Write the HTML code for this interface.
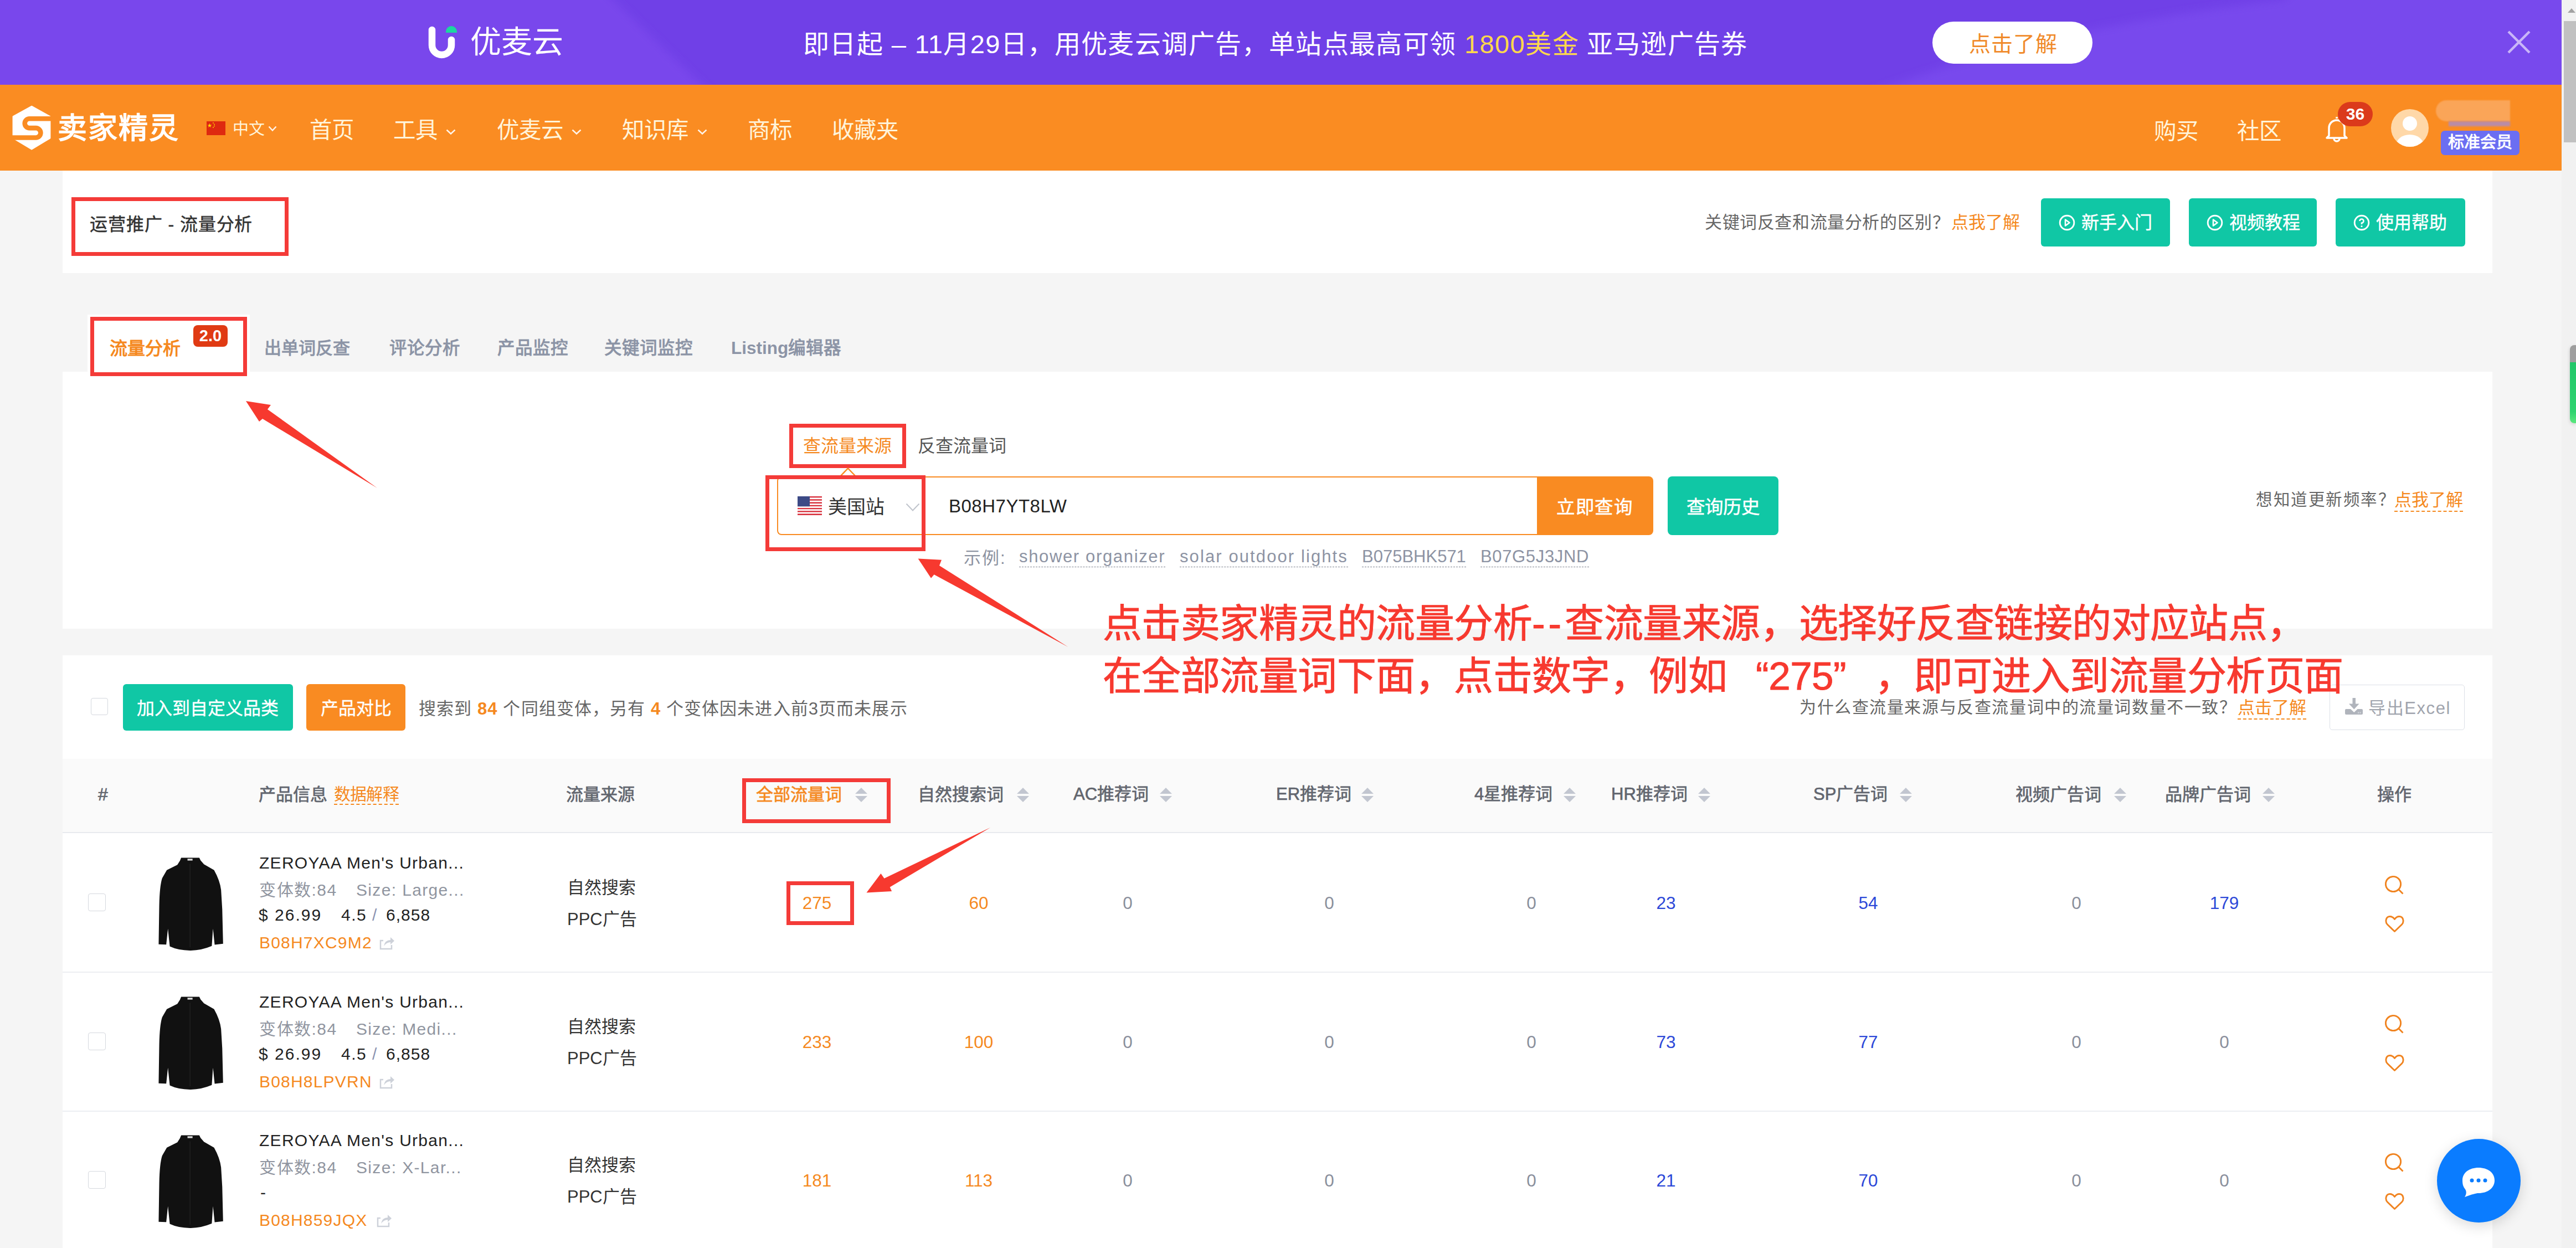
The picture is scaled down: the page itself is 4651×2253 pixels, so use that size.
<!DOCTYPE html><html lang="zh-CN"><head><meta charset="utf-8"><style>
html,body{margin:0;padding:0;}
body{width:4651px;height:2253px;overflow:hidden;position:relative;background:#F5F5F5;font-family:"Liberation Sans",sans-serif;}
.a{position:absolute;box-sizing:content-box;}
.t{position:absolute;white-space:nowrap;line-height:1;}
svg{position:absolute;overflow:visible;}
</style></head><body>
<svg style="left:0;top:0;overflow:hidden" width="4625" height="153" viewBox="0 0 4625 153"><defs><filter id="bb" x="-10%" y="-100%" width="120%" height="300%"><feGaussianBlur stdDeviation="8"/></filter></defs><rect width="4625" height="153" fill="#7040E7"/><path d="M-100 -100 L1003 -100 L1316 200 L-100 200 Z" fill="#7947EC" filter="url(#bb)"/><path d="M3250 220 Q3600 60 4123 0 L4250 -100 L4800 -100 L4800 220 Z" fill="#7848ED" filter="url(#bb)"/></svg>
<svg style="left:774px;top:46px" width="52" height="62" viewBox="0 0 52 62"><path d="M6 8 V35.5 A17.5 17.5 0 0 0 41 35.5 V26" fill="none" stroke="#fff" stroke-width="12.5" stroke-linecap="round"/><path d="M31 11 a10 10 0 0 1 20 0 v2 h-20 z" fill="#1DD6A0"/></svg>
<div class="t" style="left:849px;top:48.4px;font-size:56px;color:#fff;">优麦云</div>
<div class="t" style="left:1450px;top:56px;font-size:47px;color:#fff;letter-spacing:1.4px">即日起 – 11月29日，用优麦云调广告，单站点最高可领 <span style="color:#FFD84C">1800美金</span> 亚马逊广告券</div>
<div class="a" style="left:3489px;top:39px;width:289px;height:76px;background:#fff;border-radius:38px"></div>
<div class="t" style="left:3555px;top:59.6px;font-size:39px;color:#F08A2A;letter-spacing:1px">点击了解</div>
<svg style="left:4526px;top:54px" width="44" height="44" viewBox="0 0 44 44"><path d="M3 3 L41 41 M41 3 L3 41" stroke="rgba(255,255,255,0.6)" stroke-width="4.5"/></svg>
<div class="a" style="left:0px;top:153px;width:4625px;height:155px;background:#FA8C22"></div>
<svg style="left:15px;top:185px" width="85" height="90" viewBox="0 0 1179 1248"><path d="M585 100 L1040 355 L1040 890 L585 1165 L125 890 L125 355 Z" fill="#fff" stroke="#fff" stroke-width="40" stroke-linejoin="round"/><path d="M1150 405 L530 405 A117.5 117.5 0 0 0 530 640 L690 640 A120 120 0 0 1 690 880 L20 880" fill="none" stroke="#FA8C22" stroke-width="120"/></svg>
<div class="t" style="left:104px;top:204.5px;font-size:53px;color:#fff;font-weight:bold;letter-spacing:2px">卖家精灵</div>
<svg style="left:373px;top:219px" width="34" height="25" viewBox="0 0 34 25"><rect width="34" height="25" fill="#DE2910"/><path d="M5.5 3.5 l1 2.9 h3 l-2.4 1.8 0.9 2.9 -2.5-1.8 -2.5 1.8 0.9-2.9 -2.4-1.8 h3z" fill="#FFDE00"/><circle cx="12" cy="3" r="0.9" fill="#FFDE00"/><circle cx="14" cy="5.5" r="0.9" fill="#FFDE00"/><circle cx="14" cy="8.5" r="0.9" fill="#FFDE00"/><circle cx="12" cy="11" r="0.9" fill="#FFDE00"/></svg>
<div class="t" style="left:420px;top:219.2px;font-size:29px;color:#FFF4DA;">中文</div>
<svg style="left:484px;top:227px" width="16" height="10" viewBox="0 0 16 10"><path d="M1.5 1.5 L8.0 8.5 L14.5 1.5" fill="none" stroke="rgba(255,255,255,0.9)" stroke-width="2.5"/></svg>
<div class="t" style="left:559px;top:214.6px;font-size:40.5px;color:#FFF4DA;">首页</div>
<div class="t" style="left:709.5px;top:214.6px;font-size:40.5px;color:#FFF4DA;">工具</div>
<svg style="left:805px;top:233px" width="18" height="10" viewBox="0 0 18 10"><path d="M1.5 1.5 L9.0 8.5 L16.5 1.5" fill="none" stroke="rgba(255,255,255,0.9)" stroke-width="2.5"/></svg>
<div class="t" style="left:897px;top:214.6px;font-size:40.5px;color:#FFF4DA;">优麦云</div>
<svg style="left:1032px;top:233px" width="18" height="10" viewBox="0 0 18 10"><path d="M1.5 1.5 L9.0 8.5 L16.5 1.5" fill="none" stroke="rgba(255,255,255,0.9)" stroke-width="2.5"/></svg>
<div class="t" style="left:1123px;top:214.6px;font-size:40.5px;color:#FFF4DA;">知识库</div>
<svg style="left:1259px;top:233px" width="18" height="10" viewBox="0 0 18 10"><path d="M1.5 1.5 L9.0 8.5 L16.5 1.5" fill="none" stroke="rgba(255,255,255,0.9)" stroke-width="2.5"/></svg>
<div class="t" style="left:1350px;top:214.6px;font-size:40.5px;color:#FFF4DA;">商标</div>
<div class="t" style="left:1502px;top:214.6px;font-size:40.5px;color:#FFF4DA;">收藏夹</div>
<div class="t" style="left:3889px;top:216.6px;font-size:40.5px;color:#FFF4DA;">购买</div>
<div class="t" style="left:4039px;top:216.6px;font-size:40.5px;color:#FFF4DA;">社区</div>
<svg style="left:4196px;top:207px" width="46" height="50" viewBox="0 0 46 50"><path d="M23 4 V7 M9 38 V24 A14 14 0 0 1 37 24 V38 L41 42 H5 L9 38 Z M18 43 A5 5 0 0 0 28 43" fill="none" stroke="#fff" stroke-width="3.5" stroke-linejoin="round"/></svg>
<div class="a" style="left:4221px;top:184px;width:63px;height:44px;background:#DB3A1B;border-radius:22px"></div>
<div class="t" style="left:4221px;top:191px;width:63px;text-align:center;font-size:30px;font-weight:bold;color:#fff">36</div>
<svg style="left:4317px;top:197px" width="68" height="68" viewBox="0 0 68 68"><defs><clipPath id="cc"><circle cx="34" cy="34" r="34"/></clipPath></defs><circle cx="34" cy="34" r="34" fill="#FFD8A8"/><g clip-path="url(#cc)"><circle cx="34" cy="26" r="13" fill="#fff"/><ellipse cx="34" cy="66" rx="25" ry="20" fill="#fff"/></g></svg>
<div class="a" style="left:4398px;top:181px;width:134px;height:38px;background:#FAA558;border-radius:19px 0 0 19px;filter:blur(1px)"></div>
<div class="a" style="left:4421px;top:219px;width:111px;height:9px;background:#B98CA6;filter:blur(1.5px)"></div>
<div class="a" style="left:4407px;top:236px;width:142px;height:44px;background:#6B6EF2;border-radius:7px"></div>
<div class="t" style="left:4420px;top:242.7px;font-size:29px;color:#fff;font-weight:bold">标准会员</div>
<div class="a" style="left:113px;top:308px;width:4387px;height:185px;background:#fff"></div>
<div class="a" style="left:129px;top:356px;width:378px;height:92px;border:7px solid #F43B38"></div>
<div class="t" style="left:162px;top:389.2px;font-size:32px;color:#333;letter-spacing:0.9px;-webkit-text-stroke:0.5px #333">运营推广 - 流量分析</div>
<div class="t" style="left:3078px;top:385.7px;font-size:31px;color:#666;letter-spacing:0.6px">关键词反查和流量分析的区别？</div>
<div class="t" style="left:3523px;top:385.7px;font-size:31px;color:#F5891F;">点我了解</div>
<div class="a" style="left:3685px;top:358px;width:233px;height:87px;background:#10C7A5;border-radius:6px"></div>
<svg style="left:3716px;top:386px" width="32" height="32" viewBox="0 0 32 32"><circle cx="16" cy="16" r="12.8" fill="none" stroke="#fff" stroke-width="2.9"/><path d="M13 10.5 L20.5 16 L13 21.5 Z" fill="none" stroke="#fff" stroke-width="2.6" stroke-linejoin="round"/></svg>
<div class="t" style="left:3758px;top:385.7px;font-size:32px;color:#fff;-webkit-text-stroke:0.4px #fff">新手入门</div>
<div class="a" style="left:3952px;top:358px;width:231px;height:87px;background:#10C7A5;border-radius:6px"></div>
<svg style="left:3983px;top:386px" width="32" height="32" viewBox="0 0 32 32"><circle cx="16" cy="16" r="12.8" fill="none" stroke="#fff" stroke-width="2.9"/><path d="M13 10.5 L20.5 16 L13 21.5 Z" fill="none" stroke="#fff" stroke-width="2.6" stroke-linejoin="round"/></svg>
<div class="t" style="left:4025px;top:385.7px;font-size:32px;color:#fff;-webkit-text-stroke:0.4px #fff">视频教程</div>
<div class="a" style="left:4217px;top:358px;width:234px;height:87px;background:#10C7A5;border-radius:6px"></div>
<svg style="left:4248px;top:386px" width="32" height="32" viewBox="0 0 32 32"><g transform="translate(2 2)"><circle cx="14" cy="14" r="12.8" fill="none" stroke="#fff" stroke-width="2.9"/><path d="M10.5 11 A3.5 3.5 0 1 1 14 14.5 V17" fill="none" stroke="#fff" stroke-width="2.6"/><circle cx="14" cy="20.5" r="1.6" fill="#fff"/></g></svg>
<div class="t" style="left:4290px;top:385.7px;font-size:32px;color:#fff;-webkit-text-stroke:0.4px #fff">使用帮助</div>
<div class="a" style="left:113px;top:671px;width:4387px;height:464px;background:#fff"></div>
<div class="a" style="left:158px;top:568px;width:293px;height:110px;background:#fff"></div>
<div class="a" style="left:163px;top:572px;width:269px;height:93px;border:7px solid #F43B38"></div>
<div class="t" style="left:198px;top:612.7px;font-size:32px;color:#F5891F;font-weight:bold">流量分析</div>
<div class="a" style="left:349px;top:587px;width:62px;height:39px;background:#E03A13;border-radius:8px"></div>
<div class="t" style="left:349px;top:592px;width:62px;text-align:center;font-size:29px;font-weight:bold;color:#fff">2.0</div>
<div class="t" style="left:477px;top:612.7px;font-size:31px;color:#8C94A6;font-weight:bold">出单词反查</div>
<div class="t" style="left:703px;top:612.7px;font-size:31.5px;color:#8C94A6;font-weight:bold">评论分析</div>
<div class="t" style="left:898px;top:612.7px;font-size:31.5px;color:#8C94A6;font-weight:bold">产品监控</div>
<div class="t" style="left:1091px;top:612.7px;font-size:31.5px;color:#8C94A6;font-weight:bold">关键词监控</div>
<div class="t" style="left:1320px;top:613px;font-size:31.5px;color:#8C94A6;font-weight:bold">Listing编辑器</div>
<div class="t" style="left:1450px;top:788.7px;font-size:32px;color:#F5891F;">查流量来源</div>
<div class="t" style="left:1657px;top:788.7px;font-size:32px;color:#555;">反查流量词</div>
<div class="a" style="left:1425px;top:765px;width:197px;height:66px;border:7px solid #F43B38"></div>
<div class="a" style="left:1403px;top:860px;width:1372px;height:102px;border:2px solid #F98B22;border-right:none;border-radius:8px 0 0 8px;background:#fff"></div>
<svg style="left:1514px;top:844px" width="34" height="19" viewBox="0 0 34 19"><path d="M1 18 L17 1.5 L33 18" fill="#fff" stroke="#F98B22" stroke-width="2.5"/></svg>
<svg style="left:1440px;top:896px" width="44" height="34" viewBox="0 0 44 34"><rect y="0.00" width="44" height="2.62" fill="#D8333F"/><rect y="2.62" width="44" height="2.62" fill="#fff"/><rect y="5.23" width="44" height="2.62" fill="#D8333F"/><rect y="7.85" width="44" height="2.62" fill="#fff"/><rect y="10.46" width="44" height="2.62" fill="#D8333F"/><rect y="13.08" width="44" height="2.62" fill="#fff"/><rect y="15.69" width="44" height="2.62" fill="#D8333F"/><rect y="18.31" width="44" height="2.62" fill="#fff"/><rect y="20.92" width="44" height="2.62" fill="#D8333F"/><rect y="23.54" width="44" height="2.62" fill="#fff"/><rect y="26.15" width="44" height="2.62" fill="#D8333F"/><rect y="28.77" width="44" height="2.62" fill="#fff"/><rect y="31.38" width="44" height="2.62" fill="#D8333F"/><rect width="22" height="18.3" fill="#3C4A86"/></svg>
<div class="t" style="left:1495px;top:897.7px;font-size:34px;color:#333;">美国站</div>
<svg style="left:1635px;top:908px" width="26" height="15" viewBox="0 0 26 15"><path d="M1.5 1.5 L13.0 13.5 L24.5 1.5" fill="none" stroke="#C0C4CC" stroke-width="2"/></svg>
<div class="t" style="left:1713px;top:896.6px;font-size:33px;color:#222;letter-spacing:0.5px">B08H7YT8LW</div>
<div class="a" style="left:2775px;top:860px;width:210px;height:106px;background:#F98B22;border-radius:0 8px 8px 0"></div>
<div class="t" style="left:2810px;top:899.2px;font-size:33.5px;color:#fff;letter-spacing:1.6px;-webkit-text-stroke:0.5px #fff">立即查询</div>
<div class="a" style="left:3011px;top:860px;width:200px;height:106px;background:#10C7A5;border-radius:8px"></div>
<div class="t" style="left:3045px;top:899.2px;font-size:33.5px;color:#fff;-webkit-text-stroke:0.5px #fff">查询历史</div>
<div class="a" style="left:1382px;top:858px;width:275px;height:123px;border:7px solid #F43B38"></div>
<div class="t" style="left:1740px;top:991.7px;font-size:31px;color:#8C92A0;letter-spacing:2px">示例:</div>
<div class="t" style="left:1840px;top:988.8px;font-size:31px;color:#8D93A3;letter-spacing:1.65px;border-bottom:1.5px dashed #7D828E;padding-bottom:3px">shower organizer</div>
<div class="t" style="left:2130px;top:988.8px;font-size:31px;color:#8D93A3;letter-spacing:2.1px;border-bottom:1.5px dashed #7D828E;padding-bottom:3px">solar outdoor lights</div>
<div class="t" style="left:2459px;top:988.8px;font-size:31px;color:#8D93A3;letter-spacing:0px;border-bottom:1.5px dashed #7D828E;padding-bottom:3px">B075BHK571</div>
<div class="t" style="left:2673px;top:988.8px;font-size:31px;color:#8D93A3;letter-spacing:0.65px;border-bottom:1.5px dashed #7D828E;padding-bottom:3px">B07G5J3JND</div>
<div class="t" style="left:4073px;top:886.7px;font-size:29.5px;color:#666;letter-spacing:1.5px">想知道更新频率？</div>
<div class="t" style="left:4323px;top:886.7px;font-size:31px;color:#F5891F;border-bottom:2px dashed #F5891F;padding-bottom:4px">点我了解</div>
<div class="a" style="left:113px;top:1183px;width:4387px;height:1070px;background:#fff"></div>
<div class="a" style="left:164px;top:1260px;width:29px;height:29px;border:1.5px solid #D5D8DE;border-radius:4px;background:#fff"></div>
<div class="a" style="left:222px;top:1235px;width:307px;height:84px;background:#10C7A5;border-radius:6px"></div>
<div class="t" style="left:247px;top:1262.7px;font-size:32px;color:#fff;-webkit-text-stroke:0.4px #fff">加入到自定义品类</div>
<div class="a" style="left:553px;top:1235px;width:179px;height:84px;background:#F98B22;border-radius:6px"></div>
<div class="t" style="left:579px;top:1262.7px;font-size:32px;color:#fff;-webkit-text-stroke:0.4px #fff">产品对比</div>
<div class="t" style="left:756px;top:1264px;font-size:31px;color:#666;letter-spacing:1.1px">搜索到 <b style="color:#F5891F">84</b> 个同组变体，另有 <b style="color:#F5891F">4</b> 个变体因未进入前3页而未展示</div>
<div class="t" style="left:3249px;top:1261.7px;font-size:30px;color:#666;letter-spacing:1.58px">为什么查流量来源与反查流量词中的流量词数量不一致？</div>
<div class="t" style="left:4040px;top:1262px;font-size:31px;color:#F5891F;border-bottom:2px dashed #F5891F;padding-bottom:4px">点击了解</div>
<div class="a" style="left:4206px;top:1236px;width:242px;height:80px;border:1.5px solid #DCDFE6;border-radius:5px;background:#fff"></div>
<svg style="left:4232px;top:1258px" width="36" height="35" viewBox="0 0 36 35"><path d="M15.5 2 H21 V12.5 H27.5 L18.3 22.5 L9 12.5 H15.5 Z" fill="#B0B4BC"/><path d="M2 24 Q2 22 4 22 H12 L18.3 28 L24.5 22 H32 Q34 22 34 24 V30 Q34 32 32 32 H4 Q2 32 2 30 Z" fill="#B0B4BC"/><rect x="25" y="27.5" width="2.2" height="2.2" fill="#D5D8DE"/><rect x="28.5" y="27.5" width="2.2" height="2.2" fill="#D5D8DE"/></svg>
<div class="t" style="left:4276px;top:1262.7px;font-size:31px;color:#A0A4AD;letter-spacing:1.6px">导出Excel</div>
<div class="a" style="left:113px;top:1370px;width:4387px;height:133px;background:#FAFAFA"></div>
<div class="a" style="left:113px;top:1502px;width:4387px;height:2px;background:#E8EAEE"></div>
<div class="t" style="left:177px;top:1418px;font-size:32px;color:#62666F;-webkit-text-stroke:0.7px #62666F">#</div>
<div class="t" style="left:467px;top:1418.7px;font-size:31px;color:#62666F;-webkit-text-stroke:0.7px #62666F">产品信息</div>
<div class="t" style="left:603px;top:1418.5px;font-size:30px;letter-spacing:-0.8px;color:#F5891F;border-bottom:2px dashed #F5891F;padding-bottom:2px">数据解释</div>
<div class="t" style="left:1022px;top:1418.7px;font-size:31px;color:#62666F;-webkit-text-stroke:0.7px #62666F">流量来源</div>
<div class="t" style="left:1365px;top:1418.7px;font-size:31px;color:#F5891F;-webkit-text-stroke:0.7px #F5891F">全部流量词</div>
<svg style="left:1543px;top:1421px" width="24" height="28" viewBox="0 0 24 28"><path d="M12 1 L23 12 H1 Z M12 27 L23 16 H1 Z" fill="#C2C6D0"/></svg>
<div class="t" style="left:1657px;top:1418.7px;font-size:31px;color:#62666F;-webkit-text-stroke:0.7px #62666F">自然搜索词</div>
<svg style="left:1835px;top:1421px" width="24" height="28" viewBox="0 0 24 28"><path d="M12 1 L23 12 H1 Z M12 27 L23 16 H1 Z" fill="#C2C6D0"/></svg>
<div class="t" style="left:1938px;top:1418px;font-size:31px;color:#62666F;-webkit-text-stroke:0.7px #62666F">AC推荐词</div>
<svg style="left:2093px;top:1421px" width="24" height="28" viewBox="0 0 24 28"><path d="M12 1 L23 12 H1 Z M12 27 L23 16 H1 Z" fill="#C2C6D0"/></svg>
<div class="t" style="left:2304px;top:1418px;font-size:31px;color:#62666F;-webkit-text-stroke:0.7px #62666F">ER推荐词</div>
<svg style="left:2457px;top:1421px" width="24" height="28" viewBox="0 0 24 28"><path d="M12 1 L23 12 H1 Z M12 27 L23 16 H1 Z" fill="#C2C6D0"/></svg>
<div class="t" style="left:2662px;top:1418px;font-size:31px;color:#62666F;-webkit-text-stroke:0.7px #62666F">4星推荐词</div>
<svg style="left:2822px;top:1421px" width="24" height="28" viewBox="0 0 24 28"><path d="M12 1 L23 12 H1 Z M12 27 L23 16 H1 Z" fill="#C2C6D0"/></svg>
<div class="t" style="left:2909px;top:1418px;font-size:31px;color:#62666F;-webkit-text-stroke:0.7px #62666F">HR推荐词</div>
<svg style="left:3065px;top:1421px" width="24" height="28" viewBox="0 0 24 28"><path d="M12 1 L23 12 H1 Z M12 27 L23 16 H1 Z" fill="#C2C6D0"/></svg>
<div class="t" style="left:3274px;top:1418px;font-size:31px;color:#62666F;-webkit-text-stroke:0.7px #62666F">SP广告词</div>
<svg style="left:3429px;top:1421px" width="24" height="28" viewBox="0 0 24 28"><path d="M12 1 L23 12 H1 Z M12 27 L23 16 H1 Z" fill="#C2C6D0"/></svg>
<div class="t" style="left:3639px;top:1418.7px;font-size:31px;color:#62666F;-webkit-text-stroke:0.7px #62666F">视频广告词</div>
<svg style="left:3816px;top:1421px" width="24" height="28" viewBox="0 0 24 28"><path d="M12 1 L23 12 H1 Z M12 27 L23 16 H1 Z" fill="#C2C6D0"/></svg>
<div class="t" style="left:3909px;top:1418.7px;font-size:31px;color:#62666F;-webkit-text-stroke:0.7px #62666F">品牌广告词</div>
<svg style="left:4084px;top:1421px" width="24" height="28" viewBox="0 0 24 28"><path d="M12 1 L23 12 H1 Z M12 27 L23 16 H1 Z" fill="#C2C6D0"/></svg>
<div class="t" style="left:4292px;top:1418.7px;font-size:31px;color:#62666F;-webkit-text-stroke:0.7px #62666F">操作</div>
<div class="a" style="left:1340px;top:1405px;width:254px;height:67px;border:7px solid #F43B38"></div>
<div class="a" style="left:113px;top:1754px;width:4387px;height:2px;background:#ECEEF2"></div>
<div class="a" style="left:159px;top:1613px;width:30px;height:30px;border:1.5px solid #D5D8DE;border-radius:4px;background:#fff"></div>
<svg style="left:270px;top:1535px" width="150" height="190" viewBox="0 0 150 190"><g transform="scale(0.15228)"><path d="M375 88 L590 88 L605 120 L645 165 L765 235 Q835 360 848 470 L862 700 L872 1108 L772 1120 L752 930 L738 1135 Q610 1190 480 1188 Q340 1188 240 1140 L218 930 L198 1118 L108 1115 L115 650 Q120 420 150 330 L205 235 L330 172 L360 125 Z" fill="#111"/><path d="M480 160 L480 1150" stroke="#2a2a2a" stroke-width="6"/><rect x="450" y="100" width="60" height="22" fill="#ddd"/></g></svg>
<div class="t" style="left:468px;top:1542.7px;font-size:30px;color:#222;letter-spacing:1.28px">ZEROYAA Men's Urban...</div>
<div class="t" style="left:468px;top:1591.7px;font-size:30px;color:#9095A0;letter-spacing:1.5px">变体数:84</div>
<div class="t" style="left:643px;top:1591.7px;font-size:30px;color:#9095A0;letter-spacing:1.35px">Size: Large...</div>
<div class="t" style="left:467px;top:1636.7px;font-size:30px;color:#222;letter-spacing:2px">$ 26.99</div>
<div class="t" style="left:616px;top:1636.7px;font-size:30px;color:#222;letter-spacing:1.5px">4.5</div>
<div class="t" style="left:672px;top:1636.7px;font-size:30px;color:#8B93B0;">/</div>
<div class="t" style="left:697px;top:1636.7px;font-size:30px;color:#222;letter-spacing:1px">6,858</div>
<div class="t" style="left:468px;top:1686.7px;font-size:30px;color:#F5891F;letter-spacing:1.2px">B08H7XC9M2</div>
<svg style="left:685px;top:1688px" width="28" height="27" viewBox="0 0 28 27"><path d="M7 10 H2 V25 H22 V18" fill="none" stroke="#CDD1D9" stroke-width="2.5"/><path d="M8 20 Q10 9 20 9 V4 L27 10.5 L20 17 V13 Q13 13 8 20 Z" fill="#CDD1D9"/></svg>
<div class="t" style="left:1024px;top:1586.7px;font-size:31px;color:#333;">自然搜索</div>
<div class="t" style="left:1024px;top:1643.7px;font-size:31px;color:#333">PPC广告</div>
<div class="t" style="left:1375px;width:200px;text-align:center;top:1615.1px;font-size:31.5px;color:#F5891F">275</div>
<div class="t" style="left:1667px;width:200px;text-align:center;top:1615.1px;font-size:31.5px;color:#F5891F">60</div>
<div class="t" style="left:1936px;width:200px;text-align:center;top:1615.1px;font-size:31.5px;color:#8A8F9C">0</div>
<div class="t" style="left:2300px;width:200px;text-align:center;top:1615.1px;font-size:31.5px;color:#8A8F9C">0</div>
<div class="t" style="left:2665px;width:200px;text-align:center;top:1615.1px;font-size:31.5px;color:#8A8F9C">0</div>
<div class="t" style="left:2908px;width:200px;text-align:center;top:1615.1px;font-size:31.5px;color:#2C48D8">23</div>
<div class="t" style="left:3273px;width:200px;text-align:center;top:1615.1px;font-size:31.5px;color:#2C48D8">54</div>
<div class="t" style="left:3649px;width:200px;text-align:center;top:1615.1px;font-size:31.5px;color:#8A8F9C">0</div>
<div class="t" style="left:3916px;width:200px;text-align:center;top:1615.1px;font-size:31.5px;color:#2C48D8">179</div>
<svg style="left:4304px;top:1580px" width="38" height="38" viewBox="0 0 38 38"><circle cx="17" cy="16" r="13.6" fill="none" stroke="#F0831F" stroke-width="2.9"/><path d="M26.8 25.8 L34.5 33.5" stroke="#F0831F" stroke-width="2.9"/></svg>
<svg style="left:4304px;top:1651px" width="38" height="36" viewBox="0 0 38 36"><path d="M19.5 30.5 L6.5 18 C2 13.5 3.5 3.5 11 3.5 C15 3.5 17.5 5.5 19.5 8.5 C21.5 5.5 24 3.5 28 3.5 C35.5 3.5 37 13.5 32.5 18 Z" fill="none" stroke="#F0831F" stroke-width="2.9" stroke-linejoin="round"/></svg>
<div class="a" style="left:113px;top:2005px;width:4387px;height:2px;background:#ECEEF2"></div>
<div class="a" style="left:159px;top:1864px;width:30px;height:30px;border:1.5px solid #D5D8DE;border-radius:4px;background:#fff"></div>
<svg style="left:270px;top:1786px" width="150" height="190" viewBox="0 0 150 190"><g transform="scale(0.15228)"><path d="M375 88 L590 88 L605 120 L645 165 L765 235 Q835 360 848 470 L862 700 L872 1108 L772 1120 L752 930 L738 1135 Q610 1190 480 1188 Q340 1188 240 1140 L218 930 L198 1118 L108 1115 L115 650 Q120 420 150 330 L205 235 L330 172 L360 125 Z" fill="#111"/><path d="M480 160 L480 1150" stroke="#2a2a2a" stroke-width="6"/><rect x="450" y="100" width="60" height="22" fill="#ddd"/></g></svg>
<div class="t" style="left:468px;top:1793.7px;font-size:30px;color:#222;letter-spacing:1.28px">ZEROYAA Men's Urban...</div>
<div class="t" style="left:468px;top:1842.7px;font-size:30px;color:#9095A0;letter-spacing:1.5px">变体数:84</div>
<div class="t" style="left:643px;top:1842.7px;font-size:30px;color:#9095A0;letter-spacing:1.35px">Size: Medi...</div>
<div class="t" style="left:467px;top:1887.7px;font-size:30px;color:#222;letter-spacing:2px">$ 26.99</div>
<div class="t" style="left:616px;top:1887.7px;font-size:30px;color:#222;letter-spacing:1.5px">4.5</div>
<div class="t" style="left:672px;top:1887.7px;font-size:30px;color:#8B93B0;">/</div>
<div class="t" style="left:697px;top:1887.7px;font-size:30px;color:#222;letter-spacing:1px">6,858</div>
<div class="t" style="left:468px;top:1937.7px;font-size:30px;color:#F5891F;letter-spacing:1.2px">B08H8LPVRN</div>
<svg style="left:685px;top:1939px" width="28" height="27" viewBox="0 0 28 27"><path d="M7 10 H2 V25 H22 V18" fill="none" stroke="#CDD1D9" stroke-width="2.5"/><path d="M8 20 Q10 9 20 9 V4 L27 10.5 L20 17 V13 Q13 13 8 20 Z" fill="#CDD1D9"/></svg>
<div class="t" style="left:1024px;top:1837.7px;font-size:31px;color:#333;">自然搜索</div>
<div class="t" style="left:1024px;top:1894.7px;font-size:31px;color:#333">PPC广告</div>
<div class="t" style="left:1375px;width:200px;text-align:center;top:1866.1px;font-size:31.5px;color:#F5891F">233</div>
<div class="t" style="left:1667px;width:200px;text-align:center;top:1866.1px;font-size:31.5px;color:#F5891F">100</div>
<div class="t" style="left:1936px;width:200px;text-align:center;top:1866.1px;font-size:31.5px;color:#8A8F9C">0</div>
<div class="t" style="left:2300px;width:200px;text-align:center;top:1866.1px;font-size:31.5px;color:#8A8F9C">0</div>
<div class="t" style="left:2665px;width:200px;text-align:center;top:1866.1px;font-size:31.5px;color:#8A8F9C">0</div>
<div class="t" style="left:2908px;width:200px;text-align:center;top:1866.1px;font-size:31.5px;color:#2C48D8">73</div>
<div class="t" style="left:3273px;width:200px;text-align:center;top:1866.1px;font-size:31.5px;color:#2C48D8">77</div>
<div class="t" style="left:3649px;width:200px;text-align:center;top:1866.1px;font-size:31.5px;color:#8A8F9C">0</div>
<div class="t" style="left:3916px;width:200px;text-align:center;top:1866.1px;font-size:31.5px;color:#8A8F9C">0</div>
<svg style="left:4304px;top:1831px" width="38" height="38" viewBox="0 0 38 38"><circle cx="17" cy="16" r="13.6" fill="none" stroke="#F0831F" stroke-width="2.9"/><path d="M26.8 25.8 L34.5 33.5" stroke="#F0831F" stroke-width="2.9"/></svg>
<svg style="left:4304px;top:1902px" width="38" height="36" viewBox="0 0 38 36"><path d="M19.5 30.5 L6.5 18 C2 13.5 3.5 3.5 11 3.5 C15 3.5 17.5 5.5 19.5 8.5 C21.5 5.5 24 3.5 28 3.5 C35.5 3.5 37 13.5 32.5 18 Z" fill="none" stroke="#F0831F" stroke-width="2.9" stroke-linejoin="round"/></svg>
<div class="a" style="left:159px;top:2114px;width:30px;height:30px;border:1.5px solid #D5D8DE;border-radius:4px;background:#fff"></div>
<svg style="left:270px;top:2036px" width="150" height="190" viewBox="0 0 150 190"><g transform="scale(0.15228)"><path d="M375 88 L590 88 L605 120 L645 165 L765 235 Q835 360 848 470 L862 700 L872 1108 L772 1120 L752 930 L738 1135 Q610 1190 480 1188 Q340 1188 240 1140 L218 930 L198 1118 L108 1115 L115 650 Q120 420 150 330 L205 235 L330 172 L360 125 Z" fill="#111"/><path d="M480 160 L480 1150" stroke="#2a2a2a" stroke-width="6"/><rect x="450" y="100" width="60" height="22" fill="#ddd"/></g></svg>
<div class="t" style="left:468px;top:2043.7px;font-size:30px;color:#222;letter-spacing:1.28px">ZEROYAA Men's Urban...</div>
<div class="t" style="left:468px;top:2092.7px;font-size:30px;color:#9095A0;letter-spacing:1.5px">变体数:84</div>
<div class="t" style="left:643px;top:2092.7px;font-size:30px;color:#9095A0;letter-spacing:1.35px">Size: X-Lar...</div>
<div class="t" style="left:470px;top:2137.7px;font-size:30px;color:#222;">-</div>
<div class="t" style="left:468px;top:2187.7px;font-size:30px;color:#F5891F;letter-spacing:1.2px">B08H859JQX</div>
<svg style="left:680px;top:2189px" width="28" height="27" viewBox="0 0 28 27"><path d="M7 10 H2 V25 H22 V18" fill="none" stroke="#CDD1D9" stroke-width="2.5"/><path d="M8 20 Q10 9 20 9 V4 L27 10.5 L20 17 V13 Q13 13 8 20 Z" fill="#CDD1D9"/></svg>
<div class="t" style="left:1024px;top:2087.7px;font-size:31px;color:#333;">自然搜索</div>
<div class="t" style="left:1024px;top:2144.7px;font-size:31px;color:#333">PPC广告</div>
<div class="t" style="left:1375px;width:200px;text-align:center;top:2116.1px;font-size:31.5px;color:#F5891F">181</div>
<div class="t" style="left:1667px;width:200px;text-align:center;top:2116.1px;font-size:31.5px;color:#F5891F">113</div>
<div class="t" style="left:1936px;width:200px;text-align:center;top:2116.1px;font-size:31.5px;color:#8A8F9C">0</div>
<div class="t" style="left:2300px;width:200px;text-align:center;top:2116.1px;font-size:31.5px;color:#8A8F9C">0</div>
<div class="t" style="left:2665px;width:200px;text-align:center;top:2116.1px;font-size:31.5px;color:#8A8F9C">0</div>
<div class="t" style="left:2908px;width:200px;text-align:center;top:2116.1px;font-size:31.5px;color:#2C48D8">21</div>
<div class="t" style="left:3273px;width:200px;text-align:center;top:2116.1px;font-size:31.5px;color:#2C48D8">70</div>
<div class="t" style="left:3649px;width:200px;text-align:center;top:2116.1px;font-size:31.5px;color:#8A8F9C">0</div>
<div class="t" style="left:3916px;width:200px;text-align:center;top:2116.1px;font-size:31.5px;color:#8A8F9C">0</div>
<svg style="left:4304px;top:2081px" width="38" height="38" viewBox="0 0 38 38"><circle cx="17" cy="16" r="13.6" fill="none" stroke="#F0831F" stroke-width="2.9"/><path d="M26.8 25.8 L34.5 33.5" stroke="#F0831F" stroke-width="2.9"/></svg>
<svg style="left:4304px;top:2152px" width="38" height="36" viewBox="0 0 38 36"><path d="M19.5 30.5 L6.5 18 C2 13.5 3.5 3.5 11 3.5 C15 3.5 17.5 5.5 19.5 8.5 C21.5 5.5 24 3.5 28 3.5 C35.5 3.5 37 13.5 32.5 18 Z" fill="none" stroke="#F0831F" stroke-width="2.9" stroke-linejoin="round"/></svg>
<div class="a" style="left:1420px;top:1591px;width:108px;height:65px;border:7px solid #F43B38"></div>
<div class="t" style="left:1991px;top:1090px;font-size:71px;letter-spacing:-0.55px;-webkit-text-stroke:0.9px #F7392F;color:#F7392F">点击卖家精灵的流量分析<span style="letter-spacing:6px">--</span>查流量来源，选择好反查链接的对应站点，</div>
<div class="t" style="left:1991px;top:1185px;font-size:71px;letter-spacing:-0.55px;-webkit-text-stroke:0.9px #F7392F;color:#F7392F">在全部流量词下面，点击数字，例如<span style="display:inline-block;width:75px;text-align:right">“</span>275<span style="display:inline-block;width:75px">”</span>，即可进入到流量分析页面</div>
<svg style="left:0;top:0" width="4651" height="2253"><g fill="#F7392F"><path d="M444 724 L489 731 L483 739 L681 881 L474 756 L468 761 Z"/><path d="M1657.6 1008.4 L1700 1010.8 L1696 1021 L1928.5 1168 L1686.5 1037.3 L1681 1043.7 Z"/><path d="M1564.5 1611.6 L1590.4 1577 L1596.5 1585.8 L1788 1494 L1606.7 1601.4 L1610.1 1609 Z"/></g></svg>
<div class="a" style="left:4400px;top:2056px;width:151px;height:151px;border-radius:50%;background:#0A7CFF;box-shadow:0 6px 24px rgba(0,0,0,0.15)"></div>
<svg style="left:4444px;top:2105px" width="62" height="58" viewBox="0 0 62 58"><path d="M31 3 C47 3 60 11.5 60 26 C60 40 47 49 31 49 C26 49 20 51 6 56 C10 50 9 45 7 42 C3 37 2 32 2 26 C2 11.5 15 3 31 3 Z" fill="#fff"/><circle cx="19" cy="26" r="3.5" fill="#0A7CFF"/><circle cx="31" cy="26" r="3.5" fill="#0A7CFF"/><circle cx="43" cy="26" r="3.5" fill="#0A7CFF"/></svg>
<div class="a" style="left:4625px;top:0px;width:26px;height:2253px;background:#F1F1F1"></div>
<div class="a" style="left:4629px;top:38px;width:22px;height:219px;background:#C1C1C1"></div>
<svg style="left:4635px;top:14px" width="16" height="10" viewBox="0 0 16 10"><path d="M1 9 L8 1 L15 9 Z" fill="#A3A3A3"/></svg>
<div class="a" style="left:4640px;top:623px;width:11px;height:141px;background:linear-gradient(#9E9E9E 0, #9E9E9E 22%, #22C76A 22%, #2ED36F 85%, #5BE87E 100%);border-radius:8px 0 0 8px;box-shadow:0 2px 6px rgba(0,0,0,0.15)"></div>
</body></html>
